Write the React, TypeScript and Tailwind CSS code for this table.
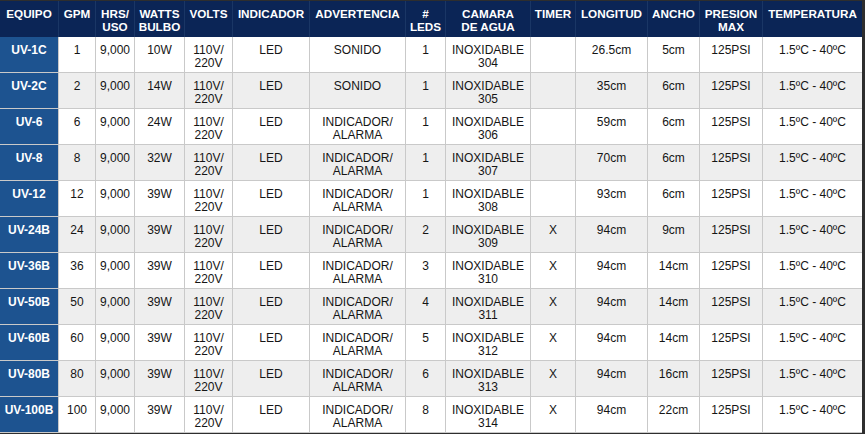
const widths = [
  'w-[59px]',
  'w-[37px]',
  'w-[39px]',
  'w-[50px]',
  'w-[48px]',
  'w-[77px]',
  'w-[96px]',
  'w-[40px]',
  'w-[85px]',
  'w-[45px]',
  'w-[72px]',
  'w-[52px]',
  'w-[63px]',
  'w-[99px]',
];

const headers: string[][] = [
  ['EQUIPO'],
  ['GPM'],
  ['HRS/', 'USO'],
  ['WATTS', 'BULBO'],
  ['VOLTS'],
  ['INDICADOR'],
  ['ADVERTENCIA'],
  ['#', 'LEDS'],
  ['CAMARA', 'DE AGUA'],
  ['TIMER'],
  ['LONGITUD'],
  ['ANCHO'],
  ['PRESION', 'MAX'],
  ['TEMPERATURA'],
];

type Row = [string, string, string, number, string, string, string, boolean, string];

// equipo, gpm, watts, leds, timer, longitud, ancho, sonido?, camara
const rows: Row[] = [
  ['UV-1C', '1', '10W', 1, '', '26.5cm', '5cm', true, '304'],
  ['UV-2C', '2', '14W', 1, '', '35cm', '6cm', true, '305'],
  ['UV-6', '6', '24W', 1, '', '59cm', '6cm', false, '306'],
  ['UV-8', '8', '32W', 1, '', '70cm', '6cm', false, '307'],
  ['UV-12', '12', '39W', 1, '', '93cm', '6cm', false, '308'],
  ['UV-24B', '24', '39W', 2, 'X', '94cm', '9cm', false, '309'],
  ['UV-36B', '36', '39W', 3, 'X', '94cm', '14cm', false, '310'],
  ['UV-50B', '50', '39W', 4, 'X', '94cm', '14cm', false, '311'],
  ['UV-60B', '60', '39W', 5, 'X', '94cm', '14cm', false, '312'],
  ['UV-80B', '80', '39W', 6, 'X', '94cm', '16cm', false, '313'],
  ['UV-100B', '100', '39W', 8, 'X', '94cm', '22cm', false, '314'],
];

function cellsFor(r: Row): string[][] {
  const [equipo, gpm, watts, leds, timer, longitud, ancho, sonido, cam] = r;
  return [
    [equipo],
    [gpm],
    ['9,000'],
    [watts],
    ['110V/', '220V'],
    ['LED'],
    sonido ? ['SONIDO'] : ['INDICADOR/', 'ALARMA'],
    [String(leds)],
    ['INOXIDABLE', cam],
    [timer],
    [longitud],
    [ancho],
    ['125PSI'],
    ['1.5ºC - 40ºC'],
  ];
}

export default function App() {
  const last = widths.length - 1;
  return (
    <div className="flex h-[434px] w-[865px] flex-col bg-[#2e2e2e] pt-px font-['Liberation_Sans',Arial,sans-serif]">
      <div className="flex h-[36px] w-[862px] shrink-0 bg-[#0b2556]">
        {headers.map((h, i) => (
          <div
            key={i}
            className={`${widths[i]} shrink-0 whitespace-nowrap pt-[6px] text-center text-[11.7px] font-bold leading-[13px] text-white ${
              i < last ? 'border-r border-[#1a3665]' : ''
            }`}
          >
            {h.map((line, j) => (
              <div key={j}>{line}</div>
            ))}
          </div>
        ))}
      </div>
      {rows.map((r, ri) => (
        <div
          key={ri}
          className={`flex h-[36px] w-[862px] shrink-0 border-b border-[#c9c9c9] ${
            ri % 2 === 0 ? 'bg-white' : 'bg-[#eeeeee]'
          }`}
        >
          {cellsFor(r).map((c, ci) => (
            <div
              key={ci}
              className={`${widths[ci]} shrink-0 whitespace-nowrap pt-[7px] text-center text-[12px] leading-[13px] ${
                ci === 0 ? 'bg-[#1d5390] font-bold text-white' : 'text-[#151515]'
              } ${ci < last ? 'border-r border-[#c9c9c9]' : ''}`}
            >
              {c.map((line, j) => (
                <div key={j}>{line}</div>
              ))}
            </div>
          ))}
        </div>
      ))}
    </div>
  );
}
